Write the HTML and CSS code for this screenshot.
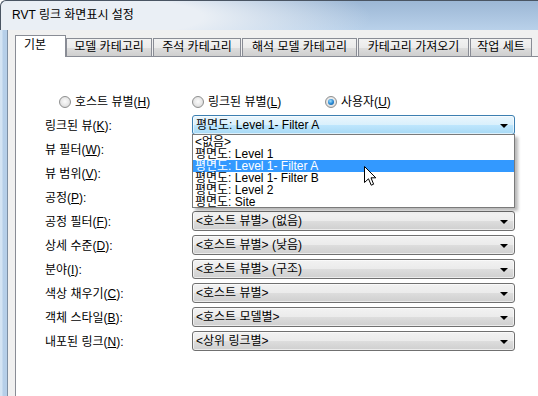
FILE: index.html
```html
<!DOCTYPE html>
<html lang="ko">
<head>
  <meta charset="UTF-8">
  <meta name="viewport" content="width=device-width, initial-scale=1.0">
  <title>RVT 링크 화면표시 설정</title>
  <link rel="stylesheet" href="styles.css">
</head>
<body>
  <div class="window">
    <div class="titlebar">
      <span class="title">RVT 링크 화면표시 설정</span>
    </div>

    <div class="frame">
      <div class="frame-edge"></div>

      <div class="client">
        <div class="tabs">
          <div class="tab active">기본</div>
          <div class="tab">모델 카테고리</div>
          <div class="tab">주석 카테고리</div>
          <div class="tab">해석 모델 카테고리</div>
          <div class="tab">카테고리 가져오기</div>
          <div class="tab">작업 세트</div>
        </div>

        <div class="panel">
          <div class="radios">
            <div class="radio"><span class="dot"></span><span>호스트 뷰별(<u>H</u>)</span></div>
            <div class="radio"><span class="dot"></span><span>링크된 뷰별(<u>L</u>)</span></div>
            <div class="radio"><span class="dot checked"></span><span>사용자(<u>U</u>)</span></div>
          </div>

          <div class="rows">
            <div class="label">링크된 뷰(<u>K</u>):</div>
            <div class="combo focused"><span>평면도: Level 1- Filter A</span><span class="arrow"></span></div>

            <div class="label">뷰 필터(<u>W</u>):</div>
            <div class="combo"><span></span><span class="arrow"></span></div>

            <div class="label">뷰 범위(<u>V</u>):</div>
            <div class="combo"><span></span><span class="arrow"></span></div>

            <div class="label">공정(<u>P</u>):</div>
            <div class="combo"><span></span><span class="arrow"></span></div>

            <div class="label">공정 필터(<u>F</u>):</div>
            <div class="combo"><span>&lt;호스트 뷰별&gt; (없음)</span><span class="arrow"></span></div>

            <div class="label">상세 수준(<u>D</u>):</div>
            <div class="combo"><span>&lt;호스트 뷰별&gt; (낮음)</span><span class="arrow"></span></div>

            <div class="label">분야(<u>I</u>):</div>
            <div class="combo"><span>&lt;호스트 뷰별&gt; (구조)</span><span class="arrow"></span></div>

            <div class="label">색상 채우기(<u>C</u>):</div>
            <div class="combo"><span>&lt;호스트 뷰별&gt;</span><span class="arrow"></span></div>

            <div class="label">객체 스타일(<u>B</u>):</div>
            <div class="combo"><span>&lt;호스트 모델별&gt;</span><span class="arrow"></span></div>

            <div class="label">내포된 링크(<u>N</u>):</div>
            <div class="combo"><span>&lt;상위 링크별&gt;</span><span class="arrow"></span></div>
          </div>

          <ul class="droplist">
            <li>&lt;없음&gt;</li>
            <li>평면도: Level 1</li>
            <li class="selected">평면도: Level 1- Filter A</li>
            <li>평면도: Level 1- Filter B</li>
            <li>평면도: Level 2</li>
            <li>평면도: Site</li>
          </ul>

          <svg class="cursor" width="13" height="21" viewBox="0 0 13 21">
            <path d="M0.5 0.5 L0.5 16.5 L4.5 12.8 L7.2 19.2 L9.6 18.2 L7 11.8 L11.8 11.8 Z" fill="#fff" stroke="#000" stroke-width="1" stroke-linejoin="miter"/>
          </svg>
        </div>
      </div>
    </div>
  </div>
</body>
</html>
```

FILE: styles.css
```css
:root {
  --face: #f0f0f0;
  --tab-border: #898c95;
  --combo-border: #707070;
  --focus-border: #3c7fb1;
  --highlight: #3399ff;
}

* {
  box-sizing: border-box;
  margin: 0;
  padding: 0;
}

body {
  background: #ffffff;
  font-family: "Liberation Sans", "Noto Sans CJK KR", sans-serif;
  font-size: 12px;
  color: #000;
}

.window {
  width: 538px;
  height: 396px;
  overflow: hidden;
  display: flex;
  flex-direction: column;
}

.titlebar {
  height: 30px;
  flex: none;
  border-top: 1px solid #4a5563;
  border-left: 1px solid #4a5563;
  border-top-left-radius: 6px;
  background:
    radial-gradient(ellipse 280px 48px at 90px 16px, rgba(234, 239, 245, 1) 40%, rgba(234, 239, 245, 0) 100%),
    linear-gradient(#9cb7d5, #b9d1ea);
  display: flex;
  align-items: center;
  padding-left: 11px;
}

.title {
  font-size: 12px;
  line-height: 14px;
  color: #000;
  margin-top: -1px;
}

.frame {
  flex: 1;
  display: flex;
}

.frame-edge {
  width: 8px;
  flex: none;
  background: linear-gradient(to right, #d4e4f4 0, #d4e4f4 2px, #b6cfe9 3px, #b6cfe9 100%);
  border-right: 1px solid #7d8fa4;
}

.client {
  flex: 1;
  background: var(--face);
  padding: 5px 0 0 7px;
  display: flex;
  flex-direction: column;
}

/* tabs */
.tabs {
  display: flex;
  align-items: flex-end;
  height: 21px;
  flex: none;
}

.tab {
  height: 18px;
  border: 1px solid var(--tab-border);
  border-bottom: none;
  background: linear-gradient(#f2f2f2 0%, #ebebeb 50%, #dddddd 51%, #cfcfcf 100%);
  font-size: 12px;
  line-height: 16px;
  text-align: center;
  white-space: nowrap;
  margin-left: 1px;
}

.tab.active {
  height: 22px;
  margin-left: 0;
  margin-bottom: -1px;
  background: #ffffff;
  position: relative;
  z-index: 1;
  text-align: left;
  padding-left: 8px;
  line-height: 18px;
}

.tab:nth-child(1) { width: 51px; }
.tab:nth-child(2) { width: 86px; margin-left: 0; }
.tab:nth-child(3) { width: 88px; }
.tab:nth-child(4) { width: 115px; }
.tab:nth-child(5) { width: 111px; }
.tab:nth-child(6) { width: 62px; }

/* panel */
.panel {
  flex: 1;
  margin-right: -30px;
  background: #ffffff;
  border: 1px solid var(--tab-border);
  border-bottom: none;
  position: relative;
  padding: 38px 0 0 0;
}

.radios {
  display: flex;
  padding-left: 43px;
  height: 14px;
  margin-bottom: 6px;
}

.radio {
  width: 133px;
  display: flex;
  align-items: center;
  gap: 4px;
  line-height: 14px;
  white-space: nowrap;
}

.dot {
  width: 12px;
  height: 12px;
  border-radius: 50%;
  border: 1px solid #8e8f8f;
  background: radial-gradient(circle at 50% 45%, #fbfbfb 0%, #e6e6e6 55%, #c9c9c9 100%);
  flex: none;
  position: relative;
}

.dot.checked::after {
  content: "";
  position: absolute;
  left: 2px;
  top: 2px;
  width: 6px;
  height: 6px;
  border-radius: 50%;
  background: radial-gradient(circle at 40% 35%, #9fe0ff 0%, #2a8ad4 50%, #0d4f8f 100%);
}

u {
  text-decoration: underline;
  text-underline-offset: 1px;
}

.rows {
  display: grid;
  grid-template-columns: 147px 323px;
  grid-auto-rows: 20px;
  row-gap: 4px;
  padding-left: 29px;
}

.label {
  line-height: 20px;
  white-space: nowrap;
  padding-top: 1px;
}

.combo {
  height: 20px;
  border: 1px solid var(--combo-border);
  border-radius: 3px;
  background: linear-gradient(#f2f2f2 0%, #ebebeb 50%, #dddddd 51%, #cfcfcf 100%);
  box-shadow: inset 0 0 0 1px rgba(255, 255, 255, 0.6);
  display: flex;
  align-items: center;
  justify-content: space-between;
  padding: 0 6px 0 3px;
  line-height: 16px;
  white-space: nowrap;
}

.combo.focused {
  border-color: var(--focus-border);
  background: linear-gradient(#eaf6fd 0%, #d9f0fc 50%, #bee6fd 51%, #a7d9f5 100%);
}

.arrow {
  width: 0;
  height: 0;
  border-left: 4px solid transparent;
  border-right: 4px solid transparent;
  border-top: 4px solid #000;
  margin-top: 2px;
}

/* open dropdown */
.droplist {
  list-style: none;
  position: absolute;
  left: 176px;
  top: 77px;
  width: 323px;
  height: 74px;
  background: #ffffff;
  border: 1px solid #7a7a7a;
  box-shadow: 3px 3px 3px rgba(0, 0, 0, 0.28);
  padding-top: 1px;
  z-index: 2;
}

.droplist li {
  height: 12px;
  line-height: 12px;
  padding-left: 2px;
  white-space: nowrap;
}

.droplist li.selected {
  background: var(--highlight);
  color: #ffffff;
}

.cursor {
  position: absolute;
  left: 348px;
  top: 109px;
  z-index: 3;
}
```
